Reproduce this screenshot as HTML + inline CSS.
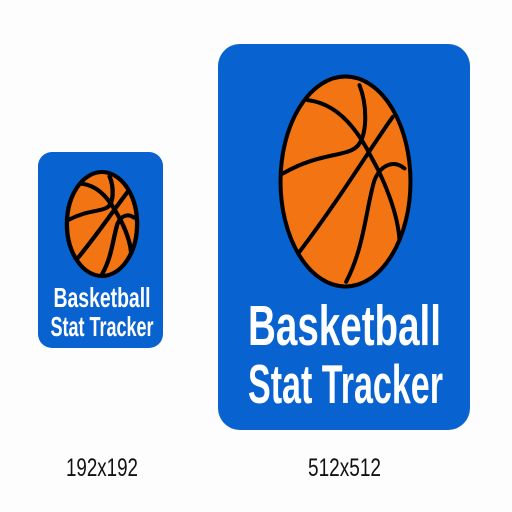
<!DOCTYPE html>
<html><head><style>html,body{margin:0;padding:0;background:#fdfdfd}svg{display:block}</style></head>
<body>
<svg width="512" height="512" viewBox="0 0 512 512" xmlns="http://www.w3.org/2000/svg" font-family="Liberation Sans, sans-serif">
<rect width="512" height="512" fill="#fdfdfd"/>
<!-- small card -->
<rect x="38" y="152" width="125" height="196" rx="14" fill="#0862d0"/>
<g transform="translate(102,224) scale(0.18,0.165) translate(-383,-424)" fill="none" stroke="#000" stroke-width="24" stroke-linecap="round">
<ellipse cx="383" cy="424" rx="195" ry="315" fill="#f27413"/>
<path d="M270 180 C360 190 420 270 460 350 C500 420 540 520 545 600"/>
<path d="M425 135 C450 200 450 300 410 325 C370 350 300 340 195 400"/>
<path d="M525 230 C460 320 370 470 245 635"/>
<path d="M560 385 C530 360 490 370 470 420 C445 500 440 620 385 725"/>
</g>
<text x="102" y="307" fill="#fff" font-weight="bold" font-size="28" text-anchor="middle" textLength="97" lengthAdjust="spacingAndGlyphs">Basketball</text>
<text x="102" y="336" fill="#fff" font-weight="bold" font-size="28" text-anchor="middle" textLength="103" lengthAdjust="spacingAndGlyphs">Stat Tracker</text>
<!-- large card -->
<rect x="218" y="44" width="252" height="386" rx="22" fill="#0862d0"/>
<g transform="translate(345.5,181.5) scale(0.3333) translate(-383,-424)" fill="none" stroke="#000" stroke-width="12" stroke-linecap="round">
<ellipse cx="383" cy="424" rx="195" ry="315" fill="#f27413"/>
<path d="M270 180 C360 190 420 270 460 350 C500 420 540 520 545 600"/>
<path d="M425 135 C450 200 450 300 410 325 C370 350 300 340 195 400"/>
<path d="M525 230 C460 320 370 470 245 635"/>
<path d="M560 385 C530 360 490 370 470 420 C445 500 440 620 385 725"/>
</g>
<text x="344.5" y="345" fill="#fff" font-weight="bold" font-size="57" text-anchor="middle" textLength="193" lengthAdjust="spacingAndGlyphs">Basketball</text>
<text x="345.5" y="403" fill="#fff" font-weight="bold" font-size="55" text-anchor="middle" textLength="195" lengthAdjust="spacingAndGlyphs">Stat Tracker</text>
<text x="102" y="476" fill="#111" font-size="25" text-anchor="middle" textLength="72" lengthAdjust="spacingAndGlyphs">192x192</text>
<text x="344.5" y="476" fill="#111" font-size="25" text-anchor="middle" textLength="73" lengthAdjust="spacingAndGlyphs">512x512</text>
</svg>
</body></html>
